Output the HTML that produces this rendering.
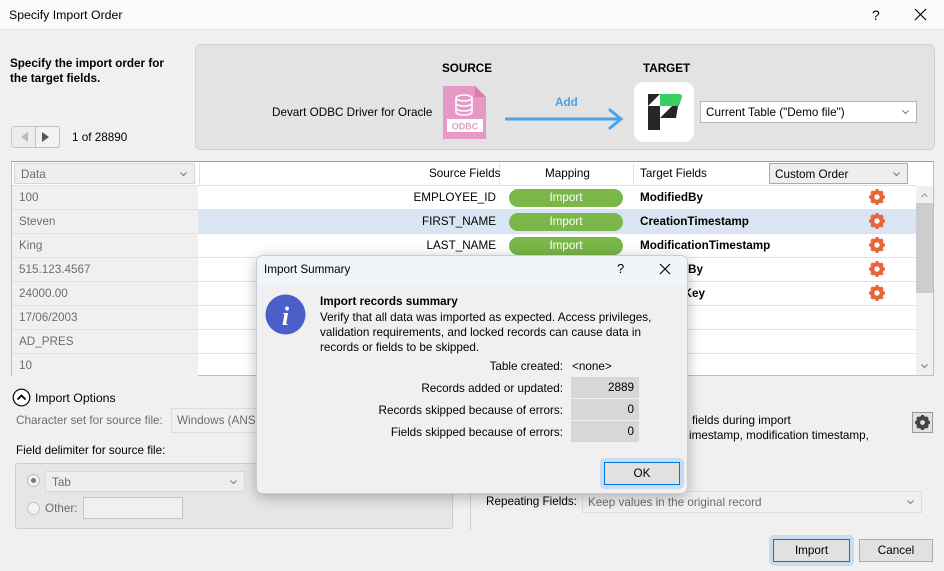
<!DOCTYPE html>
<html><head><meta charset="utf-8"><style>
*{box-sizing:border-box}
body{margin:0;width:944px;height:571px;overflow:hidden;background:#f0f0f0;font-family:"Liberation Sans","DejaVu Sans",sans-serif;font-size:11.7px;color:#000;position:relative}
.a{position:absolute;white-space:nowrap}
.b{font-weight:bold}
.g{color:#6d6d6d}
.row{position:absolute;left:12px;width:904px;height:24px;border-bottom:1px solid #e2e2e2}
.dc{position:absolute;left:0;top:0;width:186px;height:23px;background:#f0f0f0;color:#6d6d6d;padding:5px 0 0 7px}
.pill{position:absolute;left:497px;top:3px;width:114px;height:18px;border-radius:9px;background:#7ab648;color:#fff;text-align:center;line-height:18px}
.sf{position:absolute;right:420px;top:5px}
.tf{position:absolute;left:628px;top:5px;font-weight:bold}
.gear{position:absolute;left:857px;top:3px;width:16px;height:16px}
.cb{position:absolute;border:1px solid #b5b5b5;background:#fff}
.btn{position:absolute;border:1px solid #adadad;background:#e1e1e1;text-align:center}
.chev{position:absolute;right:7px;top:50%;margin-top:-2px}
</style></head><body>
<svg width="0" height="0" style="position:absolute"><defs>
<g id="gr"><circle cx="8" cy="8" r="5.2" fill="none" stroke="#e8643a" stroke-width="3.2"/><g stroke="#e8643a" stroke-width="3"><path d="M8 0V16M0 8H16M2.3 2.3L13.7 13.7M13.7 2.3L2.3 13.7"/></g><circle cx="8" cy="8" r="2.6" fill="#fff"/></g>
<path id="cv" d="M0.5 0.5L3.5 3.5L6.5 0.5" fill="none" stroke="#777" stroke-width="1"/>
</defs></svg>
<!-- title bar -->
<div class="a" style="left:0;top:0;width:944px;height:30px;background:#fafafa;border-bottom:1px solid #e8e8e8"></div>
<div class="a" style="left:9px;top:8px;font-size:12.3px">Specify Import Order</div>
<div class="a" style="left:872px;top:7px;font-size:14px">?</div>
<svg class="a" style="left:914px;top:8px" width="13" height="13"><path d="M1 1L12 12M12 1L1 12" stroke="#000" stroke-width="1.2"/></svg>

<div class="a b" style="left:10px;top:56px;line-height:15px">Specify the import order for<br>the target fields.</div>

<!-- panel -->
<div class="a" style="left:195px;top:44px;width:740px;height:106px;background:#e3e3e3;border:1px solid #cfcfcf;border-radius:6px"></div>
<div class="a b" style="left:442px;top:62px">SOURCE</div>
<div class="a" style="left:272px;top:106px">Devart ODBC Driver for Oracle</div>
<svg class="a" style="left:443px;top:86px" width="43" height="53">
<path d="M0 0H32L43 11V53H0Z" fill="#e699c6"/><path d="M32 0V11H43Z" fill="#d47eb1"/>
<ellipse cx="21" cy="12" rx="8" ry="3" fill="none" stroke="#fff" stroke-width="1.6"/>
<path d="M13 12V26C13 30 29 30 29 26V12M13 17C13 21 29 21 29 17M13 22C13 26 29 26 29 22" fill="none" stroke="#fff" stroke-width="1.6"/>
<rect x="4" y="33" width="36" height="13" fill="#fff"/><text x="22" y="43.5" font-size="9" font-weight="bold" fill="#e699c6" text-anchor="middle" font-family="Liberation Sans">ODBC</text>
</svg>
<div class="a b" style="left:555px;top:96px;color:#4a9fe8">Add</div>
<svg class="a" style="left:505px;top:108px" width="120" height="22"><path d="M0 11H116M105 2L116 11L105 20" fill="none" stroke="#4aa3ea" stroke-width="3" stroke-linecap="round"/></svg>
<div class="a b" style="left:643px;top:62px">TARGET</div>
<div class="a" style="left:634px;top:82px;width:60px;height:60px;background:#fff;border-radius:10px"></div>
<svg class="a" style="left:648px;top:94px" width="36" height="38">
<rect x="0" y="0" width="12" height="36" fill="#262626"/>
<path d="M0 12L12 0V12Z" fill="#fff"/>
<path d="M12 0H31Q34 0 34 3L31 12H12Z" fill="#36cf62"/>
<path d="M12 12H24L12 24Z" fill="#fff"/>
<path d="M24 12H30L28 24H12Z" fill="#262626"/>
</svg>
<div class="cb" style="left:700px;top:101px;width:217px;height:22px;padding:4px 5px">Current Table ("Demo file")<svg class="chev" width="7" height="5"><use href="#cv"/></svg></div>

<!-- nav -->
<div class="a" style="left:11px;top:126px;width:49px;height:22px;border:1px solid #c8c8c8;border-radius:3px;background:#ececec"></div>
<div class="a" style="left:35px;top:126px;width:25px;height:22px;border:1px solid #c0c0c0;border-radius:0 3px 3px 0;background:#f2f2f2"></div>
<svg class="a" style="left:18px;top:131px" width="40" height="12"><path d="M10 1L3 6L10 11Z" fill="#bbb"/><path d="M24 1L31 6L24 11Z" fill="#555"/></svg>
<div class="a" style="left:72px;top:131px">1 of 28890</div>

<!-- grid -->
<div class="a" style="left:11px;top:161px;width:923px;height:215px;background:#fff;border:1px solid #a9c3e0;border-top-color:#7da2ce"></div>
<div class="a" style="left:12px;top:162px;width:904px;height:24px;border-bottom:1px solid #e0e0e0;background:#fff"></div>
<div class="a" style="left:14px;top:163px;width:181px;height:21px;background:#eee;border:1px solid #d6d6d6;color:#6d6d6d;padding:4px 6px">Data<svg class="chev" width="7" height="5"><use href="#cv"/></svg></div>
<div class="a" style="left:199px;top:163px;width:1px;height:22px;background:#e3e3e3"></div>
<div class="a" style="left:499px;top:163px;width:1px;height:22px;background:#e3e3e3"></div>
<div class="a" style="left:633px;top:163px;width:1px;height:22px;background:#e3e3e3"></div>
<div class="a" style="left:429px;top:167px">Source Fields</div>
<div class="a" style="left:545px;top:167px">Mapping</div>
<div class="a" style="left:640px;top:167px">Target Fields</div>
<div class="a" style="left:769px;top:163px;width:139px;height:21px;background:#eee;border:1px solid #aaa;padding:4px 5px">Custom Order<svg class="chev" width="7" height="5"><use href="#cv"/></svg></div>

<div class="row" style="top:186px"><div class="dc">100</div><div class="sf">EMPLOYEE_ID</div><div class="pill">Import</div><div class="tf">ModifiedBy</div><svg class="gear"><use href="#gr"/></svg></div>
<div class="row" style="top:210px;background:#d9e5f2"><div class="dc">Steven</div><div class="sf">FIRST_NAME</div><div class="pill">Import</div><div class="tf">CreationTimestamp</div><svg class="gear"><use href="#gr"/></svg></div>
<div class="row" style="top:234px"><div class="dc">King</div><div class="sf">LAST_NAME</div><div class="pill">Import</div><div class="tf">ModificationTimestamp</div><svg class="gear"><use href="#gr"/></svg></div>
<div class="row" style="top:258px"><div class="dc">515.123.4567</div><div class="tf">ModifiedBy</div><svg class="gear"><use href="#gr"/></svg></div>
<div class="row" style="top:282px"><div class="dc">24000.00</div><div class="tf">PrimaryKey</div><svg class="gear"><use href="#gr"/></svg></div>
<div class="row" style="top:306px"><div class="dc">17/06/2003</div></div>
<div class="row" style="top:330px"><div class="dc">AD_PRES</div></div>
<div class="row" style="top:354px;border:none"><div class="dc">10</div></div>
<!-- scrollbar -->
<div class="a" style="left:916px;top:186px;width:17px;height:189px;background:#f0f0f0"></div>
<div class="a" style="left:916px;top:203px;width:17px;height:90px;background:#cdcdcd"></div>
<svg class="a" style="left:921px;top:193px" width="7" height="5"><path d="M0.5 4L3.5 1L6.5 4" fill="none" stroke="#999"/></svg>
<svg class="a" style="left:921px;top:364px" width="7" height="5"><use href="#cv"/></svg>

<!-- bottom -->
<svg class="a" style="left:12px;top:388px" width="19" height="19"><circle cx="9.5" cy="9.5" r="8.3" fill="#fff" stroke="#000" stroke-width="1.2"/><path d="M5.5 11.5L9.5 7.5L13.5 11.5" fill="none" stroke="#000" stroke-width="1.8"/></svg>
<div class="a" style="left:35px;top:391px;font-size:12.3px">Import Options</div>
<div class="a g" style="left:16px;top:414px">Character set for source file:</div>
<div class="a" style="left:171px;top:408px;width:100px;height:25px;border:1px solid #ddd;background:#f0f0f0;color:#6d6d6d;padding:5px 5px">Windows (ANSI)</div>
<div class="a" style="left:16px;top:444px">Field delimiter for source file:</div>
<div class="a" style="left:15px;top:463px;width:438px;height:66px;background:#e6e6e6;border:1px solid #cdcdcd;border-radius:3px"></div>
<div class="a" style="left:27px;top:474px;width:13px;height:13px;border-radius:50%;border:1px solid #bbb;background:#f3f3f3"></div>
<div class="a" style="left:31px;top:478px;width:5px;height:5px;border-radius:50%;background:#777"></div>
<div class="a" style="left:45px;top:471px;width:200px;height:21px;background:#eee;border:1px solid #d8d8d8;color:#6d6d6d;padding:4px 6px">Tab<svg class="chev" width="7" height="5"><use href="#cv"/></svg></div>
<div class="a" style="left:27px;top:502px;width:13px;height:13px;border-radius:50%;border:1px solid #c4c4c4;background:#f3f3f3"></div>
<div class="a g" style="left:45px;top:502px">Other:</div>
<div class="a" style="left:83px;top:497px;width:100px;height:22px;background:#f0f0f0;border:1px solid #c6c6c6"></div>

<div class="a" style="left:470px;top:400px;width:1px;height:130px;background:#d0d0d0"></div>
<div class="a" style="left:692px;top:414px">fields during import</div>
<div class="a" style="left:689px;top:429px">imestamp, modification timestamp,</div>
<div class="a" style="left:912px;top:412px;width:21px;height:21px;border:1px solid #999;background:#e1e1e1"></div>
<svg class="a" style="left:914px;top:414px" width="17" height="17"><circle cx="8.5" cy="8.5" r="5" fill="none" stroke="#444" stroke-width="3"/><g stroke="#444" stroke-width="2.8"><path d="M8.5 1V16M1 8.5H16M3.2 3.2L13.8 13.8M13.8 3.2L3.2 13.8"/></g><circle cx="8.5" cy="8.5" r="2.4" fill="#e1e1e1"/></svg>
<div class="a" style="left:486px;top:495px">Repeating Fields:</div>
<div class="a" style="left:582px;top:491px;width:340px;height:22px;border:1px solid #ddd;background:#f0f0f0;color:#6d6d6d;padding:4px 5px">Keep values in the original record<svg class="chev" width="7" height="5"><use href="#cv"/></svg></div>

<div class="a" style="left:769px;top:535px;width:85px;height:31px;border-radius:5px;background:#c5dcf1"></div>
<div class="btn" style="left:773px;top:539px;width:77px;height:23px;border-color:#0078d7;line-height:21px">Import</div>
<div class="btn" style="left:859px;top:539px;width:74px;height:23px;line-height:21px">Cancel</div>

<!-- dialog -->
<div class="a" style="left:256px;top:255px;width:432px;height:239px;background:#f0f0f0;border:1px solid #c9cdd4;border-radius:7px;box-shadow:0 3px 14px rgba(0,0,0,.28);overflow:hidden">
 <div class="a" style="left:0;top:0;width:432px;height:29px;background:#f1f5f8"></div>
 <div class="a" style="left:7px;top:7px">Import Summary</div>
 <div class="a" style="left:360px;top:5px;font-size:13px">?</div>
 <svg class="a" style="left:402px;top:7px" width="12" height="12"><path d="M1 1L11 11M11 1L1 11" stroke="#000" stroke-width="1.1"/></svg>
 <svg class="a" style="left:8px;top:38px" width="41" height="41"><circle cx="20.5" cy="20.5" r="20" fill="#4a5fc9"/><text x="20.5" y="31" font-size="26" font-weight="bold" font-style="italic" fill="#fff" text-anchor="middle" font-family="Liberation Serif">i</text></svg>
 <div class="a b" style="left:63px;top:39px">Import records summary</div>
 <div class="a" style="left:63px;top:54px;line-height:15px">Verify that all data was imported as expected. Access privileges,<br>validation requirements, and locked records can cause data in<br>records or fields to be skipped.</div>
 <div class="a" style="right:124px;top:104px">Table created:</div>
 <div class="a" style="left:315px;top:104px">&lt;none&gt;</div>
 <div class="a" style="right:124px;top:126px">Records added or updated:</div>
 <div class="a" style="left:314px;top:121px;width:68px;height:21px;background:#d7d7d7;text-align:right;padding:4px 5px">2889</div>
 <div class="a" style="right:124px;top:148px">Records skipped because of errors:</div>
 <div class="a" style="left:314px;top:143px;width:68px;height:21px;background:#d7d7d7;text-align:right;padding:4px 5px">0</div>
 <div class="a" style="right:124px;top:170px">Fields skipped because of errors:</div>
 <div class="a" style="left:314px;top:165px;width:68px;height:21px;background:#d7d7d7;text-align:right;padding:4px 5px">0</div>
 <div class="a" style="left:343px;top:202px;width:84px;height:31px;border-radius:5px;background:#c5dcf1"></div>
 <div class="btn" style="left:347px;top:206px;width:76px;height:23px;border-color:#0078d7;line-height:21px">OK</div>
</div>
</body></html>
